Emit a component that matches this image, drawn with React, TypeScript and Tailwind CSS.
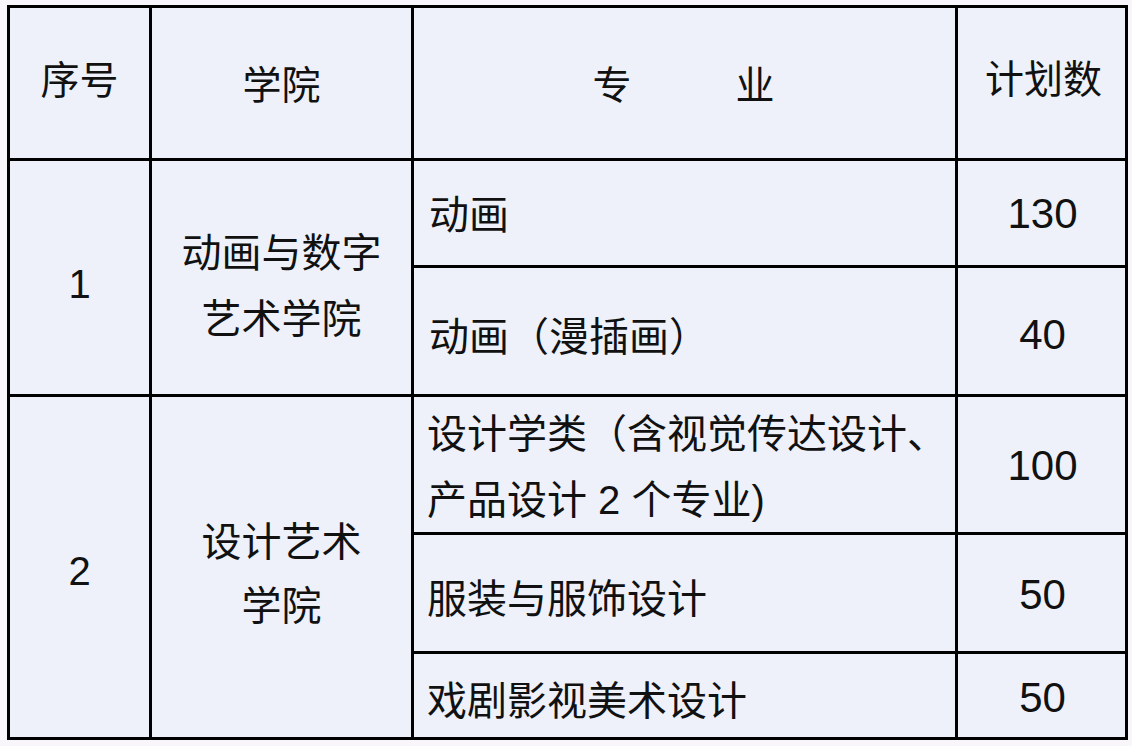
/**
 * Enrollment plan table: colleges, majors and planned intake.
 */

const FONT = '"Liberation Sans", "Noto Sans CJK SC", sans-serif';

const cell = 'bg-[#eef1f9] flex items-center';
const num = 'bg-[#eef1f9] flex items-center justify-center text-[42px] pl-[2px]';

export default function App() {
  return (
    <div
      className="w-[1132px] h-[746px] bg-[#f8f6fa] pt-[5px] pl-[7px] text-[#111] text-[40px]"
      style={{ fontFamily: FONT }}
    >
      <div className="grid w-[1121px] grid-cols-[139px_259px_541px_167px] grid-rows-[150px_104px_126px_135px_116px_83px] gap-[3px] bg-black p-[3px]">
        {/* Header */}
        <div className={`${cell} justify-center pb-[4px] text-[39px]`}>序号</div>
        <div className={`${cell} justify-center pt-[6px] text-[39px]`}>学院</div>
        <div className={`${cell} justify-center gap-[104px] pt-[6px] pr-[2px] text-[39px]`}>
          <span>专</span>
          <span>业</span>
        </div>
        <div className={`${cell} justify-center pb-[6px] pl-[4px] text-[39px]`}>计划数</div>

        {/* Group 1 */}
        <div className={`${cell} row-span-2 justify-center pt-[12px]`}>1</div>
        <div className={`${cell} row-span-2 justify-center text-center leading-[66px] pt-[16px]`}>
          动画与数字
          <br />
          艺术学院
        </div>
        <div className={`${cell} pl-[15px] pt-[4px]`}>动画</div>
        <div className={`${num}`}>130</div>
        <div className={`${cell} pl-[15px] pt-[12px]`}>动画（漫插画）</div>
        <div className={`${num} pt-[6px]`}>40</div>

        {/* Group 2 */}
        <div className={`${cell} row-span-3 justify-center pt-[8px]`}>2</div>
        <div className={`${cell} row-span-3 justify-center text-center leading-[64px] pt-[14px]`}>
          设计艺术
          <br />
          学院
        </div>
        <div className={`${cell} pl-[13px] leading-[66px] pt-[4px]`}>
          <div>
            设计学类（含视觉传达设计、
            <br />
            产品设计 2 个专业)
          </div>
        </div>
        <div className={`${num} pt-[2px]`}>100</div>
        <div className={`${cell} pl-[13px] pt-[12px]`}>服装与服饰设计</div>
        <div className={`${num} pt-[2px]`}>50</div>
        <div className={`${cell} pl-[13px] pt-[10px]`}>戏剧影视美术设计</div>
        <div className={`${num} pt-[4px]`}>50</div>
      </div>
    </div>
  );
}
